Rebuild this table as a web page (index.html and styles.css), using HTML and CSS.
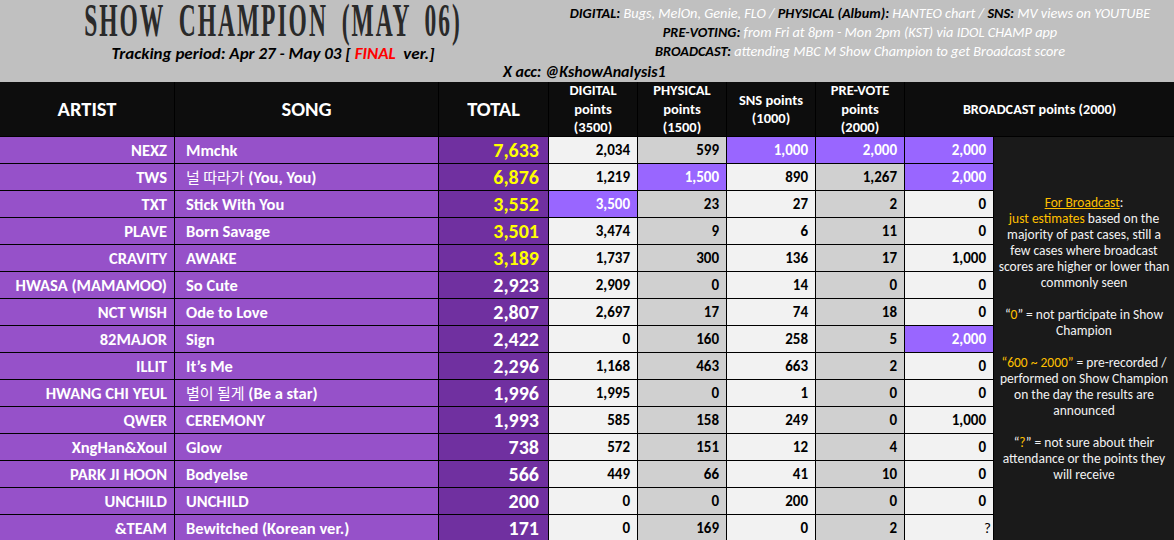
FILE: index.html
```html
<!DOCTYPE html>
<html lang="en">
<head>
<meta charset="utf-8">
<title>Show Champion (May 06)</title>
<link rel="stylesheet" href="styles.css">
</head>
<body>
<div class="top">
  <div class="top-main">
    <div class="title-block">
      <div class="title"><span class="title-text">SHOW CHAMPION (MAY 06)</span></div>
      <div class="tracking">Tracking period: Apr 27 - May 03 [ <span class="red">FINAL</span>&nbsp; ver.]</div>
    </div>
    <div class="info">
      <div class="info-line"><b>DIGITAL:</b> <span class="v">Bugs, MelOn, Genie, FLO /</span> <b>PHYSICAL (Album):</b> <span class="v">HANTEO chart /</span> <b>SNS:</b> <span class="v">MV views on YOUTUBE</span></div>
      <div class="info-line"><b>PRE-VOTING:</b> <span class="v">from Fri at 8pm - Mon 2pm (KST) via IDOL CHAMP app</span></div>
      <div class="info-line"><b>BROADCAST:</b> <span class="v">attending MBC M Show Champion to get Broadcast score</span></div>
    </div>
  </div>
  <div class="xacc">X acc: @KshowAnalysis1</div>
</div>

<div class="chart">
  <div class="row head">
    <div class="h big">ARTIST</div>
    <div class="h big">SONG</div>
    <div class="h big">TOTAL</div>
    <div class="h sub">DIGITAL<br>points<br>(3500)</div>
    <div class="h sub">PHYSICAL<br>points<br>(1500)</div>
    <div class="h sub">SNS points<br>(1000)</div>
    <div class="h sub">PRE-VOTE<br>points<br>(2000)</div>
    <div class="h sub wide">BROADCAST points (2000)</div>
  </div>

  <div class="row">
    <div class="c artist">NEXZ</div><div class="c song">Mmchk</div><div class="c total yel">7,633</div>
    <div class="c n w">2,034</div><div class="c n g">599</div><div class="c n p">1,000</div><div class="c n p">2,000</div><div class="c n p">2,000</div>
  </div>
  <div class="row">
    <div class="c artist">TWS</div><div class="c song"><span class="ko">널 따라가</span> (You, You)</div><div class="c total yel">6,876</div>
    <div class="c n w">1,219</div><div class="c n p">1,500</div><div class="c n w">890</div><div class="c n g">1,267</div><div class="c n p">2,000</div>
  </div>
  <div class="row">
    <div class="c artist">TXT</div><div class="c song">Stick With You</div><div class="c total yel">3,552</div>
    <div class="c n p">3,500</div><div class="c n g">23</div><div class="c n w">27</div><div class="c n g">2</div><div class="c n w">0</div>
  </div>
  <div class="row">
    <div class="c artist">PLAVE</div><div class="c song">Born Savage</div><div class="c total yel">3,501</div>
    <div class="c n w">3,474</div><div class="c n g">9</div><div class="c n w">6</div><div class="c n g">11</div><div class="c n w">0</div>
  </div>
  <div class="row">
    <div class="c artist">CRAVITY</div><div class="c song">AWAKE</div><div class="c total yel">3,189</div>
    <div class="c n w">1,737</div><div class="c n g">300</div><div class="c n w">136</div><div class="c n g">17</div><div class="c n w">1,000</div>
  </div>
  <div class="row">
    <div class="c artist">HWASA (MAMAMOO)</div><div class="c song">So Cute</div><div class="c total">2,923</div>
    <div class="c n w">2,909</div><div class="c n g">0</div><div class="c n w">14</div><div class="c n g">0</div><div class="c n w">0</div>
  </div>
  <div class="row">
    <div class="c artist">NCT WISH</div><div class="c song">Ode to Love</div><div class="c total">2,807</div>
    <div class="c n w">2,697</div><div class="c n g">17</div><div class="c n w">74</div><div class="c n g">18</div><div class="c n w">0</div>
  </div>
  <div class="row">
    <div class="c artist">82MAJOR</div><div class="c song">Sign</div><div class="c total">2,422</div>
    <div class="c n w">0</div><div class="c n g">160</div><div class="c n w">258</div><div class="c n g">5</div><div class="c n p">2,000</div>
  </div>
  <div class="row">
    <div class="c artist">ILLIT</div><div class="c song">It’s Me</div><div class="c total">2,296</div>
    <div class="c n w">1,168</div><div class="c n g">463</div><div class="c n w">663</div><div class="c n g">2</div><div class="c n w">0</div>
  </div>
  <div class="row">
    <div class="c artist">HWANG CHI YEUL</div><div class="c song"><span class="ko">별이 될게</span> (Be a star)</div><div class="c total">1,996</div>
    <div class="c n w">1,995</div><div class="c n g">0</div><div class="c n w">1</div><div class="c n g">0</div><div class="c n w">0</div>
  </div>
  <div class="row">
    <div class="c artist">QWER</div><div class="c song">CEREMONY</div><div class="c total">1,993</div>
    <div class="c n w">585</div><div class="c n g">158</div><div class="c n w">249</div><div class="c n g">0</div><div class="c n w">1,000</div>
  </div>
  <div class="row">
    <div class="c artist">XngHan&amp;Xoul</div><div class="c song">Glow</div><div class="c total">738</div>
    <div class="c n w">572</div><div class="c n g">151</div><div class="c n w">12</div><div class="c n g">4</div><div class="c n w">0</div>
  </div>
  <div class="row">
    <div class="c artist">PARK JI HOON</div><div class="c song">Bodyelse</div><div class="c total">566</div>
    <div class="c n w">449</div><div class="c n g">66</div><div class="c n w">41</div><div class="c n g">10</div><div class="c n w">0</div>
  </div>
  <div class="row">
    <div class="c artist">UNCHILD</div><div class="c song">UNCHILD</div><div class="c total">200</div>
    <div class="c n w">0</div><div class="c n g">0</div><div class="c n w">200</div><div class="c n g">0</div><div class="c n w">0</div>
  </div>
  <div class="row">
    <div class="c artist">&amp;TEAM</div><div class="c song">Bewitched (Korean ver.)</div><div class="c total">171</div>
    <div class="c n w">0</div><div class="c n g">169</div><div class="c n w">0</div><div class="c n g">2</div><div class="c n w q">?</div>
  </div>

  <div class="notes">
    <p><span class="o u">For Broadcast</span>:<br><span class="o">just estimates</span> based on the<br>majority of past cases, still a<br>few cases where broadcast<br>scores are higher or lower than<br>commonly seen</p>
    <p>“<span class="o">0</span>” = not participate in Show<br>Champion</p>
    <p><span class="o">“600 ~ 2000”</span> = pre-recorded /<br>performed on Show Champion<br>on the day the results are<br>announced</p>
    <p>“<span class="o">?</span>” = not sure about their<br>attendance or the points they<br>will receive</p>
  </div>
</div>
</body>
</html>
```

FILE: styles.css
```css
* { box-sizing: border-box; }
html, body { margin: 0; padding: 0; }
body {
  width: 1174px;
  height: 540px;
  overflow: hidden;
  background: #1a1a1a;
  font-family: Carlito, Lato, "Open Sans", sans-serif;
}

/* ---------- top banner ---------- */
.top {
  height: 82px;
  background: #c0c0c0;
  display: flex;
  flex-direction: column;
}
.top-main {
  display: flex;
  height: 63px;
}
.title-block {
  width: 546px;
  display: flex;
  flex-direction: column;
  align-items: center;
}
.title {
  height: 40px;
  padding-top: 10px;
  display: flex;
  justify-content: center;
  white-space: nowrap;
}
.title-text {
  display: block;
  font-family: "Liberation Serif", serif;
  font-weight: bold;
  font-size: 23.5px;
  line-height: 20px;
  height: 20px;
  color: #2a2a2a;
  letter-spacing: 2px;
  word-spacing: 6px;
  transform: scaleY(2);
  transform-origin: center;
}
.tracking {
  margin-top: 9px;
  font-size: 17px;
  line-height: 18px;
  font-weight: bold;
  font-style: italic;
  color: #000;
  white-space: nowrap;
}
.red { color: #ff0000; }

.info {
  flex: 1;
  padding-top: 4px;
  text-align: center;
  font-size: 14.3px;
  line-height: 19.2px;
  font-style: italic;
  white-space: nowrap;
}
.info b { color: #000; font-weight: bold; }
.info .v { color: #ffffff; }

.xacc {
  padding-left: 503px;
  font-size: 16px;
  line-height: 18px;
  font-weight: bold;
  font-style: italic;
  color: #000;
}

/* ---------- chart grid ---------- */
.chart {
  display: grid;
  grid-template-columns: 175px 264px 110px 89px 89px 89px 89px 89px 180px;
  grid-template-rows: 55px repeat(15, 27px);
}
.row { display: contents; }

.h {
  background: #0d0d0d;
  color: #ffffff;
  font-weight: bold;
  text-align: center;
  display: flex;
  align-items: center;
  justify-content: center;
  border-right: 1px solid #000;
  border-bottom: 1px solid #000;
}
.h.big { font-size: 20.5px; }
.h.sub { font-size: 14.5px; line-height: 18.5px; }
.h.wide { grid-column: 8 / span 2; border-right: none; font-size: 14.2px; }

.c {
  border-right: 1px solid #000;
  border-bottom: 1px solid #000;
  font-weight: bold;
  font-size: 15px;
  line-height: 26px;
  white-space: nowrap;
  overflow: hidden;
}
.artist {
  background: #9651c9;
  color: #fff;
  text-align: right;
  padding-right: 7px;
  font-size: 16.5px;
}
.song {
  background: #9651c9;
  color: #fff;
  padding-left: 11px;
  font-size: 16.5px;
}
.ko {
  font-family: "Noto Sans CJK KR", sans-serif;
  font-weight: 400;
  font-size: 15px;
}
.total {
  background: #7030a0;
  color: #fff;
  text-align: right;
  padding-right: 9px;
  font-size: 20px;
}
.total.yel { color: #ffff00; }
.n {
  text-align: right;
  padding-right: 7px;
  color: #000;
}
.n.w { background: #f2f2f2; }
.n.g { background: #d0d0d0; }
.n.p { background: #9966ff; color: #fff; }
.n.q { padding-right: 2px; font-weight: normal; }

.notes {
  grid-column: 9;
  grid-row: 2 / span 15;
  background: #1a1a1a;
  color: #f2f2f2;
  text-align: center;
  font-size: 13.5px;
  line-height: 16px;
  padding-top: 58px;
  white-space: nowrap;
}
.notes p { margin: 0 0 16px 0; }
.o { color: #ffc000; }
.u { text-decoration: underline; }
```
